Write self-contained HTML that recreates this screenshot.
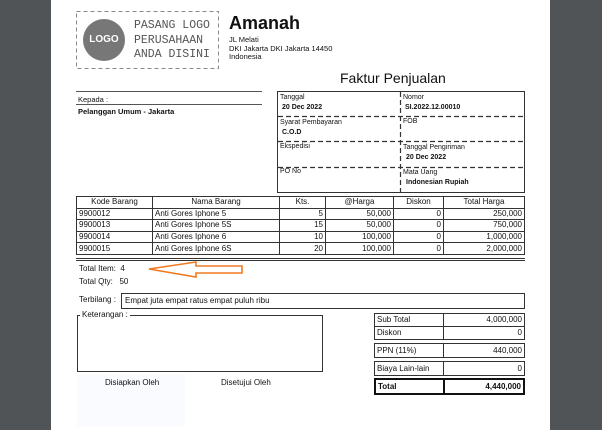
<!DOCTYPE html>
<html><head><meta charset="utf-8"><style>
*{margin:0;padding:0;box-sizing:border-box}
body{width:602px;height:430px;background:#505457;position:relative;overflow:hidden;font-family:"Liberation Sans",sans-serif;color:#111}
.page{position:absolute;left:51px;top:0;width:499px;height:430px;background:#fff}
.a{position:absolute;white-space:nowrap}
.s{font-size:8px}
.b{font-weight:bold}
table{border-collapse:collapse;position:absolute;font-size:8px}
td{border:1px solid #333;padding:0 2px;height:11.6px;line-height:10px}
.r{text-align:right}.c{text-align:center}
</style></head><body>
<div class="page"></div>
<svg class="a" style="left:0;top:0" width="602" height="430">
<rect x="76.5" y="11.5" width="142" height="57" fill="none" stroke="#888" stroke-dasharray="4,3"/>
<g stroke="#333" stroke-width="1.2" stroke-dasharray="5,3">
<line x1="400.5" y1="92" x2="400.5" y2="192"/>
<line x1="278" y1="116.5" x2="524" y2="116.5"/>
<line x1="278" y1="141.5" x2="524" y2="141.5"/>
<line x1="278" y1="167.5" x2="524" y2="167.5"/>
</g>
<polygon points="149,269 196,262 196,266 242,266 242,273 196,273 196,277" fill="none" stroke="#f07a22" stroke-width="1.6"/>
</svg>
<div class="a" style="left:83px;top:19px;width:42px;height:42px;border-radius:50%;background:#777;color:#fff;font-weight:bold;font-size:10px;line-height:42px;text-align:center">LOGO</div>
<div class="a" style="left:134px;top:19px;font-family:'Liberation Mono',monospace;font-size:11.5px;line-height:14.5px;color:#555">PASANG LOGO<br>PERUSAHAAN<br>ANDA DISINI</div>
<div class="a b" style="left:229px;top:13px;font-size:18px">Amanah</div>
<div class="a s" style="left:229px;top:36px;line-height:8.6px;font-size:7.5px">JL Melati<br>DKI Jakarta DKI Jakarta 14450<br>Indonesia</div>
<div class="a" style="left:340px;top:70px;font-size:14px">Faktur Penjualan</div>
<div class="a" style="left:76px;top:91px;width:186px;border-top:1px solid #555"></div>
<div class="a" style="left:76px;top:104px;width:186px;border-top:1px solid #555"></div>
<div class="a s" style="left:78px;top:95px;font-size:7.5px">Kepada :</div>
<div class="a s b" style="left:78px;top:107px;font-size:7.5px">Pelanggan Umum - Jakarta</div>
<div class="a" style="left:277px;top:91px;width:248px;height:102px;border:1px solid #333"></div>
<div class="a" style="left:280px;top:93px;font-size:7px;line-height:10px">Tanggal<br><b style="padding-left:2px">20 Dec 2022</b></div>
<div class="a" style="left:280px;top:118px;font-size:7px;line-height:10px">Syarat Pembayaran<br><b style="padding-left:2px">C.O.D</b></div>
<div class="a" style="left:280px;top:143px;font-size:7px">Ekspedisi</div>
<div class="a" style="left:280px;top:168px;font-size:7px">PO No</div>
<div class="a" style="left:403px;top:93px;font-size:7px;line-height:10px">Nomor<br><b style="padding-left:2px">SI.2022.12.00010</b></div>
<div class="a" style="left:403px;top:118px;font-size:7px">FOB</div>
<div class="a" style="left:403px;top:143px;font-size:7px;line-height:10px">Tanggal Pengiriman<br><b style="padding-left:3px">20 Dec 2022</b></div>
<div class="a" style="left:403px;top:168px;font-size:7px;line-height:10px">Mata Uang<br><b style="padding-left:3px">Indonesian Rupiah</b></div>
<table style="left:76px;top:196px;width:449px">
<tr><td class="c" style="width:76px">Kode Barang</td><td class="c" style="width:127px">Nama Barang</td><td class="c" style="width:46px">Kts.</td><td class="c" style="width:68px">@Harga</td><td class="c" style="width:50px">Diskon</td><td class="c">Total Harga</td></tr>
<tr><td>9900012</td><td>Anti Gores Iphone 5</td><td class="r">5</td><td class="r">50,000</td><td class="r">0</td><td class="r">250,000</td></tr>
<tr><td>9900013</td><td>Anti Gores Iphone 5S</td><td class="r">15</td><td class="r">50,000</td><td class="r">0</td><td class="r">750,000</td></tr>
<tr><td>9900014</td><td>Anti Gores Iphone 6</td><td class="r">10</td><td class="r">100,000</td><td class="r">0</td><td class="r">1,000,000</td></tr>
<tr><td>9900015</td><td>Anti Gores Iphone 6S</td><td class="r">20</td><td class="r">100,000</td><td class="r">0</td><td class="r">2,000,000</td></tr>
</table>
<div class="a" style="left:76px;top:258px;width:449px;border-top:1px solid #333"></div>
<div class="a" style="left:76px;top:260px;width:449px;border-top:1px solid #333"></div>
<div class="a s" style="left:79px;top:264px">Total Item:&nbsp; 4</div>
<div class="a s" style="left:79px;top:277px">Total Qty:&nbsp;&nbsp; 50</div>
<div class="a s" style="left:79px;top:295px">Terbilang :</div>
<div class="a s" style="left:121px;top:293px;width:404px;height:16px;border:1px solid #333;padding:2px 3px">Empat juta empat ratus empat puluh ribu</div>
<div class="a" style="left:77px;top:315px;width:246px;height:57px;border:1px solid #333"></div>
<div class="a s" style="left:80px;top:310px;background:#fff;padding:0 2px">Keterangan :</div>
<div class="a" style="left:77px;top:375px;width:108px;height:52px;background:#f9fbfe"></div>
<div class="a s" style="left:105px;top:378px">Disiapkan Oleh</div>
<div class="a s" style="left:221px;top:378px">Disetujui Oleh</div>
<table style="left:374px;top:313px;width:151px"><tr><td style="width:69px;height:13px">Sub Total</td><td class="r">4,000,000</td></tr><tr><td style="height:13px">Diskon</td><td class="r">0</td></tr></table>
<table style="left:374px;top:343px;width:151px"><tr><td style="width:69px;height:14px">PPN (11%)</td><td class="r">440,000</td></tr></table>
<table style="left:374px;top:361px;width:151px"><tr><td style="width:69px;height:14px">Biaya Lain-lain</td><td class="r">0</td></tr></table>
<table style="left:374px;top:378px;width:151px" class="b"><tr><td style="width:69px;height:15px;border:2px solid #111">Total</td><td class="r" style="border:2px solid #111">4,440,000</td></tr></table>
</body></html>
